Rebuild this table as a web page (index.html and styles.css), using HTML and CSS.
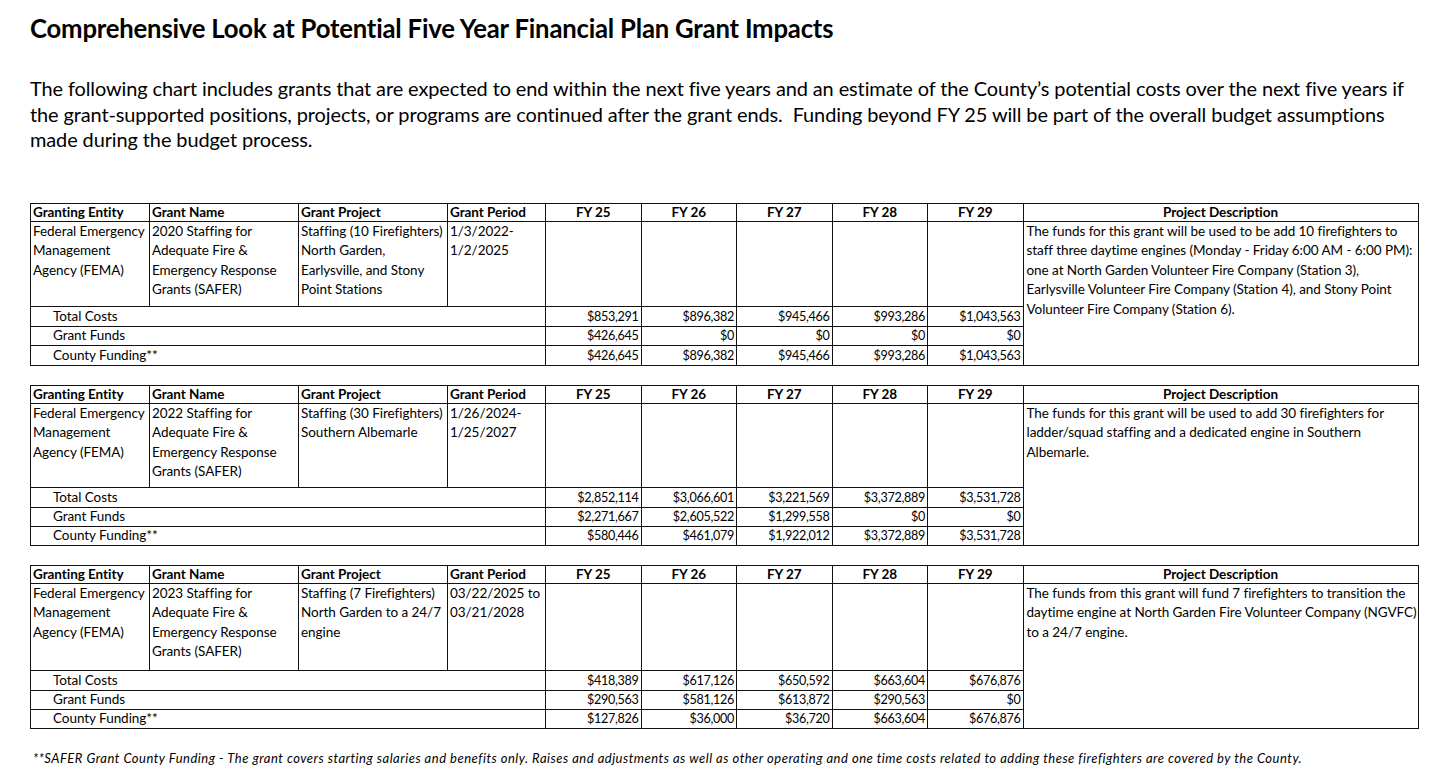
FILE: index.html
```html
<!DOCTYPE html>
<html lang="en">
<head>
<meta charset="utf-8">
<title>Five Year Financial Plan Grant Impacts</title>
<link rel="stylesheet" href="styles.css">
</head>
<body>
<main class="page">
  <h1 class="title">Comprehensive Look at Potential Five Year Financial Plan Grant Impacts</h1>
  <p class="intro">The following chart includes grants that are expected to end within the next five years and an estimate of the County’s potential costs over the next five years if<br>the grant-supported positions, projects, or programs are continued after the grant ends.&nbsp; Funding beyond FY 25 will be part of the overall budget assumptions<br>made during the budget process.</p>

  <section class="tables">
    <table class="grant">
      <colgroup>
        <col class="c-entity"><col class="c-name"><col class="c-project"><col class="c-period">
        <col class="c-fy"><col class="c-fy"><col class="c-fy"><col class="c-fy"><col class="c-fy">
        <col class="c-desc">
      </colgroup>
      <tr class="head">
        <th class="l">Granting Entity</th><th class="l">Grant Name</th><th class="l">Grant Project</th><th class="l">Grant Period</th>
        <th>FY 25</th><th>FY 26</th><th>FY 27</th><th>FY 28</th><th>FY 29</th><th>Project Description</th>
      </tr>
      <tr class="info info-1">
        <td>Federal Emergency<br>Management<br>Agency (FEMA)</td>
        <td>2020 Staffing for<br>Adequate Fire &amp;<br>Emergency Response<br>Grants (SAFER)</td>
        <td>Staffing (10 Firefighters)<br>North Garden,<br>Earlysville, and Stony<br>Point Stations</td>
        <td>1/3/2022-<br>1/2/2025</td>
        <td></td><td></td><td></td><td></td><td></td>
        <td class="desc" rowspan="4">The funds for this grant will be used to be add 10 firefighters to<br>staff three daytime engines (Monday - Friday 6:00 AM - 6:00 PM):<br>one at North Garden Volunteer Fire Company (Station 3),<br>Earlysville Volunteer Fire Company (Station 4), and Stony Point<br>Volunteer Fire Company (Station 6).</td>
      </tr>
      <tr class="money m-a">
        <td class="label" colspan="4">Total Costs</td>
        <td>$853,291</td><td>$896,382</td><td>$945,466</td><td>$993,286</td><td>$1,043,563</td>
      </tr>
      <tr class="money m-b">
        <td class="label" colspan="4">Grant Funds</td>
        <td>$426,645</td><td>$0</td><td>$0</td><td>$0</td><td>$0</td>
      </tr>
      <tr class="money m-a">
        <td class="label" colspan="4">County Funding**</td>
        <td>$426,645</td><td>$896,382</td><td>$945,466</td><td>$993,286</td><td>$1,043,563</td>
      </tr>
    </table>

    <table class="grant">
      <colgroup>
        <col class="c-entity"><col class="c-name"><col class="c-project"><col class="c-period">
        <col class="c-fy"><col class="c-fy"><col class="c-fy"><col class="c-fy"><col class="c-fy">
        <col class="c-desc">
      </colgroup>
      <tr class="head">
        <th class="l">Granting Entity</th><th class="l">Grant Name</th><th class="l">Grant Project</th><th class="l">Grant Period</th>
        <th>FY 25</th><th>FY 26</th><th>FY 27</th><th>FY 28</th><th>FY 29</th><th>Project Description</th>
      </tr>
      <tr class="info info-2">
        <td>Federal Emergency<br>Management<br>Agency (FEMA)</td>
        <td>2022 Staffing for<br>Adequate Fire &amp;<br>Emergency Response<br>Grants (SAFER)</td>
        <td>Staffing (30 Firefighters)<br>Southern Albemarle</td>
        <td>1/26/2024-<br>1/25/2027</td>
        <td></td><td></td><td></td><td></td><td></td>
        <td class="desc" rowspan="4">The funds for this grant will be used to add 30 firefighters for<br>ladder/squad staffing and a dedicated engine in Southern<br>Albemarle.</td>
      </tr>
      <tr class="money m-a">
        <td class="label" colspan="4">Total Costs</td>
        <td>$2,852,114</td><td>$3,066,601</td><td>$3,221,569</td><td>$3,372,889</td><td>$3,531,728</td>
      </tr>
      <tr class="money m-b">
        <td class="label" colspan="4">Grant Funds</td>
        <td>$2,271,667</td><td>$2,605,522</td><td>$1,299,558</td><td>$0</td><td>$0</td>
      </tr>
      <tr class="money m-b">
        <td class="label" colspan="4">County Funding**</td>
        <td>$580,446</td><td>$461,079</td><td>$1,922,012</td><td>$3,372,889</td><td>$3,531,728</td>
      </tr>
    </table>

    <table class="grant">
      <colgroup>
        <col class="c-entity"><col class="c-name"><col class="c-project"><col class="c-period">
        <col class="c-fy"><col class="c-fy"><col class="c-fy"><col class="c-fy"><col class="c-fy">
        <col class="c-desc">
      </colgroup>
      <tr class="head">
        <th class="l">Granting Entity</th><th class="l">Grant Name</th><th class="l">Grant Project</th><th class="l">Grant Period</th>
        <th>FY 25</th><th>FY 26</th><th>FY 27</th><th>FY 28</th><th>FY 29</th><th>Project Description</th>
      </tr>
      <tr class="info info-3">
        <td>Federal Emergency<br>Management<br>Agency (FEMA)</td>
        <td>2023 Staffing for<br>Adequate Fire &amp;<br>Emergency Response<br>Grants (SAFER)</td>
        <td>Staffing (7 Firefighters)<br>North Garden to a 24/7<br>engine</td>
        <td>03/22/2025 to<br>03/21/2028</td>
        <td></td><td></td><td></td><td></td><td></td>
        <td class="desc" rowspan="4">The funds from this grant will fund 7 firefighters to transition the<br>daytime engine at North Garden Fire Volunteer Company (NGVFC)<br>to a 24/7 engine.</td>
      </tr>
      <tr class="money m-a">
        <td class="label" colspan="4">Total Costs</td>
        <td>$418,389</td><td>$617,126</td><td>$650,592</td><td>$663,604</td><td>$676,876</td>
      </tr>
      <tr class="money m-b">
        <td class="label" colspan="4">Grant Funds</td>
        <td>$290,563</td><td>$581,126</td><td>$613,872</td><td>$290,563</td><td>$0</td>
      </tr>
      <tr class="money m-b">
        <td class="label" colspan="4">County Funding**</td>
        <td>$127,826</td><td>$36,000</td><td>$36,720</td><td>$663,604</td><td>$676,876</td>
      </tr>
    </table>
  </section>

  <p class="note">**SAFER Grant County Funding - The grant covers starting salaries and benefits only. Raises and adjustments as well as other operating and one time costs related to adding these firefighters are covered by the County.</p>
</main>
</body>
</html>
```

FILE: styles.css
```css
* { box-sizing: border-box; }

html, body {
  margin: 0;
  padding: 0;
  background: #ffffff;
}

body {
  font-family: Lato, "Open Sans", "DejaVu Sans", sans-serif;
  color: #000;
}

.page {
  padding: 13px 0 0 30px;
  width: 1456px;
}

.title {
  margin: 0;
  font-size: 25.7px;
  line-height: 30px;
  font-weight: 700;
  letter-spacing: -0.2px;
}

.intro {
  margin: 33px 0 0 0;
  width: 1420px;
  font-size: 19.95px;
  line-height: 25.5px;
  letter-spacing: -0.1px;
}

.tables {
  margin-top: 50px;
  display: flex;
  flex-direction: column;
  gap: 19px;
}

.grant {
  border-collapse: collapse;
  table-layout: fixed;
  width: 1388px;
  font-size: 13.5px;
  letter-spacing: -0.05px;
}

.grant td, .grant th {
  border: 1px solid #111;
  padding: 0 2px;
  white-space: nowrap;
  overflow: hidden;
}

.c-entity { width: 119px; }
.c-name { width: 149px; }
.c-project { width: 149px; }
.c-period { width: 98px; }
.c-fy { width: 95.5px; }
.c-desc { width: 395px; }

.head th {
  height: 18px;
  line-height: 17px;
  font-weight: 700;
  text-align: center;
}

.head th.l { text-align: left; }

.info td {
  vertical-align: top;
  line-height: 19.5px;
  padding-top: 0;
}

.info-1 { height: 85px; }
.info-2 { height: 84px; }
.info-3 { height: 87px; }

.info td.desc {
  padding-left: 3px;
}

.money td {
  line-height: 17px;
  text-align: right;
  padding: 0 2px;
  font-size: 12.6px;
  letter-spacing: -0.3px;
}

.m-a td { height: 20px; }
.m-b td { height: 19px; }

.money td.label {
  text-align: left;
  padding-left: 22px;
  font-size: 13.5px;
  letter-spacing: -0.05px;
}

.note {
  margin: 21px 0 0 3px;
  font-size: 13px;
  font-style: italic;
  letter-spacing: 0.5px;
}
```
